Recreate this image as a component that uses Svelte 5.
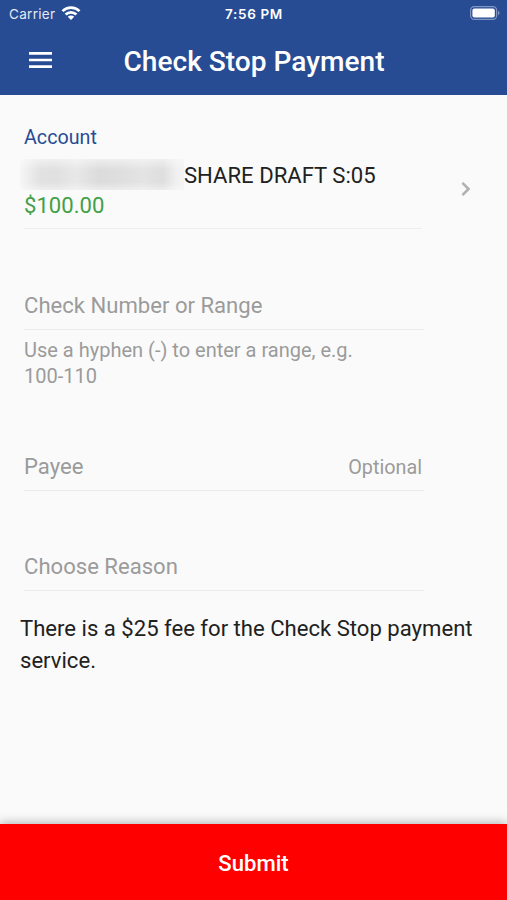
<script lang="ts">
    const title = 'Check Stop Payment';
    const account = {
        name: 'SHARE DRAFT S:05',
        balance: '$100.00'
    };
</script>

<div class="screen">
    <header>
        <div class="status">
            <div class="carrier">
                <span>Carrier</span>
                <svg width="20" height="14" viewBox="0 0 20 14">
                    <g fill="none" stroke="#fff" stroke-width="2.7">
                        <path d="M1.5 5.1a12.2 12.2 0 0 1 17 0" />
                        <path d="M4.6 8.5a7.8 7.8 0 0 1 10.8 0" />
                    </g>
                    <path d="M6.8 10.7a4.6 4.6 0 0 1 6.4 0L10 13.9z" fill="#fff" />
                </svg>
            </div>
            <span class="time">7:56 PM</span>
            <svg class="battery" width="30" height="14" viewBox="0 0 30 14">
                <rect x=".6" y=".6" width="26" height="12.8" rx="3.6" fill="none" stroke="#8095c3" stroke-width="1.2" />
                <rect x="2.4" y="2.4" width="22.4" height="9.2" rx="2" fill="#fff" />
                <path d="M28 4.8q1.6.7 1.6 2.2T28 9.2z" fill="#8095c3" />
            </svg>
        </div>
        <div class="toolbar">
            <button class="menu" aria-label="Menu">
                <svg width="23" height="16" viewBox="0 0 23 16">
                    <path d="M0 1.4h23M0 8h23M0 14.6h23" stroke="#fff" stroke-width="2.6" />
                </svg>
            </button>
            <h1>{title}</h1>
        </div>
    </header>

    <main>
        <div class="account">
            <div class="details">
                <div class="label">Account</div>
                <div class="name"><span class="redacted"></span><span>{account.name}</span></div>
                <div class="balance">{account.balance}</div>
            </div>
            <svg class="chevron" width="10" height="16" viewBox="0 0 10 16">
                <path d="M1.4 1.8L7.6 8l-6.2 6.2" fill="none" stroke="#b0b0b0" stroke-width="2.5" />
            </svg>
        </div>

        <div class="field number"><span>Check Number or Range</span></div>
        <p class="hint">Use a hyphen (-) to enter a range, e.g.<br />100-110</p>
        <div class="field payee"><span>Payee</span><span class="optional">Optional</span></div>
        <div class="field reason"><span>Choose Reason</span></div>

        <p class="notice">There is a $25 fee for the Check Stop payment<br />service.</p>
    </main>

    <button class="submit">Submit</button>
</div>

<style>
    :global(body) {
        margin: 0;
    }

    .screen {
        display: flex;
        flex-direction: column;
        width: 507px;
        height: 900px;
        overflow: hidden;
        background: #fafafa;
        color: #212121;
        font-family: Roboto, sans-serif;
        font-size: 22.1px;
        white-space: nowrap;
    }

    header {
        flex: none;
        height: 95px;
        background: #274c93;
        color: #fff;
    }

    .status {
        display: grid;
        grid-template-columns: 1fr auto 1fr;
        align-items: center;
        height: 27px;
        padding: 0 7px 0 9px;
        font-family: Inter, sans-serif;
        font-size: 13.5px;
    }

    .carrier {
        display: flex;
        align-items: center;
        gap: 6px;
        color: #e4e9f3;
        letter-spacing: 0.3px;
    }

    .carrier svg {
        margin-top: -1px;
    }

    .time {
        margin-left: -1px;
        font-weight: 600;
        font-size: 13.5px;
        letter-spacing: 0.65px;
    }

    .battery {
        justify-self: end;
        margin-top: -1px;
    }

    .toolbar {
        display: grid;
        grid-template-columns: 70px 1fr 70px;
        align-items: center;
        height: 68px;
    }

    button {
        border: 0;
        padding: 0;
        font-family: inherit;
    }

    .menu {
        display: flex;
        margin: -3px 0 0 29px;
        background: none;
    }

    h1 {
        margin: 1px 0 0 1px;
        text-align: center;
        font-size: 28.1px;
        font-weight: 500;
    }

    main {
        flex: 1;
        padding: 0 20px 0 24px;
    }

    .account {
        display: flex;
        align-items: center;
        height: 134px;
    }

    .details {
        width: 398px;
        height: 104px;
        margin-top: 30px;
        border-bottom: 1px solid #eee;
        box-sizing: border-box;
    }

    .label {
        line-height: 25px;
        color: #274c93;
        font-size: 19.7px;
    }

    .name {
        display: flex;
        align-items: center;
        height: 32px;
        margin: 9px 0 0 -4px;
    }

    .redacted {
        width: 164px;
        height: 31px;
        margin-top: -2px;
        background:
            linear-gradient(#fafafa99, #fafafa00 35%, #fafafa00 75%, #fafafa88),
            linear-gradient(90deg, #f6f6f6, #e2e2e2 12%, #e0e0e0 22%, #e8e8e8 34%, #dcdcdc 48%, #dedede 60%, #e4e4e4 75%, #dedede 87%, #f1f1f1 96%, #f3f3f3);
    }

    .balance {
        line-height: 29px;
        color: #43a047;
    }

    .chevron {
        margin: 54px 0 0 39px;
    }

    .field {
        display: flex;
        justify-content: space-between;
        align-items: center;
        box-sizing: border-box;
        width: 400px;
        height: 48px;
        padding: 0 2px 2px 0;
        border-bottom: 1px solid #ebebeb;
        color: #9b9b9b;
    }

    .number {
        margin-top: 53px;
    }

    .hint {
        margin: 7px 0 0;
        color: #9b9b9b;
        font-size: 20px;
        line-height: 26px;
    }

    .payee {
        margin-top: 54px;
    }

    .optional {
        padding-top: 3px;
        font-size: 19.8px;
    }

    .reason {
        margin-top: 52px;
    }

    .notice {
        margin: 21px 0 0 -4px;
        line-height: 32px;
    }

    .submit {
        flex: none;
        height: 76px;
        padding-top: 2px;
        background: #f00;
        color: #fff;
        font-size: 22.1px;
        font-weight: 500;
        box-shadow: 0 -1px 10px rgba(0, 0, 0, 0.3);
    }
</style>
